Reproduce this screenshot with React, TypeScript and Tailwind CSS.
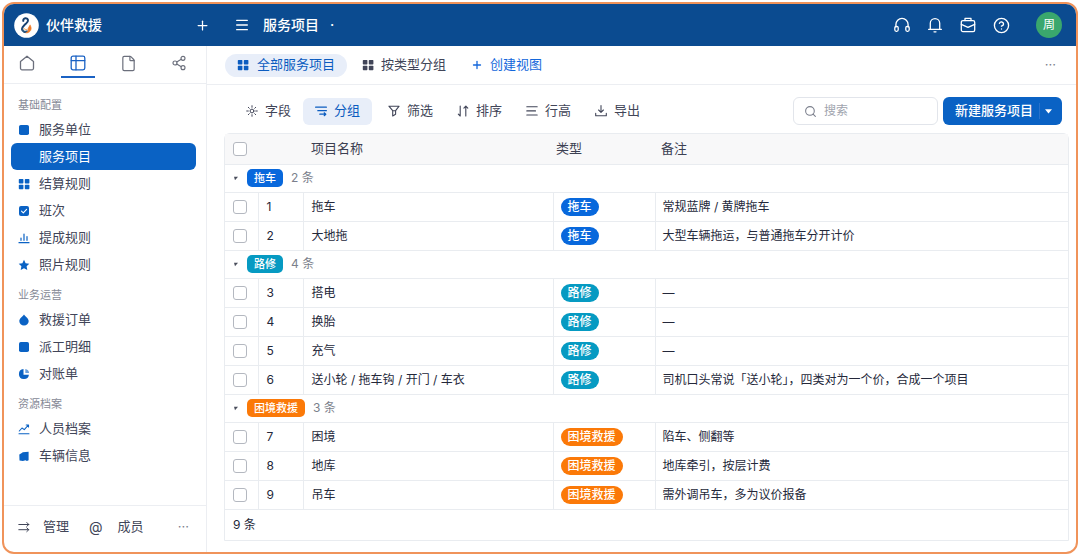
import type { ReactNode } from 'react'
import { CircleHelp, File, Menu, Plus, Search, Share2 } from 'lucide-react'

type Kind = '拖车' | '路修' | '困境救援'

interface Service {
  id: number
  name: string
  note: string
}

interface Group {
  kind: Kind
  rows: Service[]
}

interface NavEntry {
  label: string
  icon?: ReactNode
  active?: boolean
}

const kindColors: Record<Kind, string> = {
  拖车: 'bg-[#0868dc]',
  路修: 'bg-[#069ac2]',
  困境救援: 'bg-[#fb7908]',
}

const groups: Group[] = [
  {
    kind: '拖车',
    rows: [
      { id: 1, name: '拖车', note: '常规蓝牌 / 黄牌拖车' },
      { id: 2, name: '大地拖', note: '大型车辆拖运，与普通拖车分开计价' },
    ],
  },
  {
    kind: '路修',
    rows: [
      { id: 3, name: '搭电', note: '—' },
      { id: 4, name: '换胎', note: '—' },
      { id: 5, name: '充气', note: '—' },
      {
        id: 6,
        name: '送小轮 / 拖车钩 / 开门 / 车衣',
        note: '司机口头常说「送小轮」，四类对为一个价，合成一个项目',
      },
    ],
  },
  {
    kind: '困境救援',
    rows: [
      { id: 7, name: '困境', note: '陷车、侧翻等' },
      { id: 8, name: '地库', note: '地库牵引，按层计费' },
      { id: 9, name: '吊车', note: '需外调吊车，多为议价报备' },
    ],
  },
]

const total = groups.reduce((sum, group) => sum + group.rows.length, 0)

function Glyph({ children }: { children: ReactNode }) {
  return (
    <svg
      width="12"
      height="12"
      viewBox="0 0 12 12"
      fill="none"
      stroke="currentColor"
      strokeLinecap="round"
      strokeLinejoin="round"
      className="shrink-0"
      aria-hidden="true"
    >
      {children}
    </svg>
  )
}

function LineIcon({ children }: { children: ReactNode }) {
  return (
    <svg
      width="16"
      height="16"
      viewBox="0 0 16 16"
      fill="none"
      stroke="currentColor"
      strokeWidth="1.3"
      strokeLinecap="round"
      strokeLinejoin="round"
      aria-hidden="true"
    >
      {children}
    </svg>
  )
}

function SquareIcon() {
  return (
    <Glyph>
      <rect x="1" y="1" width="10" height="10" rx="1.8" fill="currentColor" stroke="none" />
    </Glyph>
  )
}

function GridIcon() {
  return (
    <Glyph>
      <g fill="currentColor" stroke="none">
        <rect x="0.8" y="1" width="4.6" height="4.4" rx="0.7" />
        <rect x="6.8" y="1" width="4.6" height="4.4" rx="0.7" />
        <rect x="0.8" y="6.8" width="4.6" height="4.4" rx="0.7" />
        <rect x="6.8" y="6.8" width="4.6" height="4.4" rx="0.7" />
      </g>
    </Glyph>
  )
}

function CheckSquareIcon() {
  return (
    <Glyph>
      <rect x="1" y="1" width="10" height="10" rx="2" fill="currentColor" stroke="none" />
      <path d="M3.5 6.2 5.3 7.8 8.6 4.4" stroke="white" strokeWidth="1.1" />
    </Glyph>
  )
}

function BarsIcon() {
  return (
    <Glyph>
      <path d="M1 10.7h10M3 8.3V6M6 8.3V2M9 8.3V4.5" strokeWidth="1.2" />
    </Glyph>
  )
}

function StarIcon() {
  return (
    <Glyph>
      <path
        d="m6 .8 1.6 3.4 3.7.5-2.7 2.6.7 3.7L6 9.2 2.7 11l.7-3.7L.7 4.7l3.7-.5z"
        fill="currentColor"
        stroke="none"
      />
    </Glyph>
  )
}

function DropIcon() {
  return (
    <Glyph>
      <path
        d="M6 .4C7.2 2.4 10.7 4.2 10.7 7.1a4.7 4.5 0 0 1-9.4 0C1.3 4.2 4.8 2.4 6 .4Z"
        fill="currentColor"
        stroke="none"
      />
    </Glyph>
  )
}

function PieIcon() {
  return (
    <Glyph>
      <path d="M5.5 1.1A5 5 0 1 0 10.9 6.7H5.5Z" fill="currentColor" stroke="none" />
      <path d="M7.3.9a4.5 4.5 0 0 1 3.8 4H7.3Z" fill="currentColor" stroke="none" opacity="0.6" />
    </Glyph>
  )
}

function TrendIcon() {
  return (
    <Glyph>
      <path d="M1 10.8h10M1.3 8 4 5l2.3 1.6L10.4 2M8.2 2h2.3v2" strokeWidth="1.1" />
    </Glyph>
  )
}

function VehicleIcon() {
  return (
    <Glyph>
      <path
        d="M1.3 4.4 3.4 3.2l1.4-.9 5.8-.5v8.4l-1.7.8-1.4-.7-2.600.7-3.400-.5Z"
        fill="currentColor"
        stroke="none"
      />
    </Glyph>
  )
}

function Logo() {
  return (
    <svg width="25" height="25" viewBox="0 0 25 25" fill="none" strokeLinecap="round" aria-hidden="true">
      <circle cx="12.5" cy="12.5" r="12.3" fill="white" />
      <path
        d="M9.3 7.9C8.6 5 13.6 4.2 14 7.2c.3 2.2-1.7 3-3.3 4.5-1.5 1.4-2.8 2.7-2.6 4.6"
        stroke="#17406f"
        strokeWidth="2"
      />
      <path d="M8.1 16.2c.4 2.6 3 3.4 4.9 2.2" stroke="#29567f" strokeWidth="2.2" />
      <path
        d="M16.1 12.3c2.6 3.4.4 7.8-4.3 7.6 1.6-1 2.7-1.6 2.3-3.2-.3-1.5.8-2.9 2-4.4Z"
        fill="#ee7b28"
        stroke="#ee7b28"
        strokeWidth="0.6"
      />
      <path d="M9.9 15.5c.6.9 1.9 1.3 3.2.9" stroke="#f3a04e" />
    </svg>
  )
}

const navSections: { title: string; items: NavEntry[] }[] = [
  {
    title: '基础配置',
    items: [
      { label: '服务单位', icon: <SquareIcon /> },
      { label: '服务项目', active: true },
      { label: '结算规则', icon: <GridIcon /> },
      { label: '班次', icon: <CheckSquareIcon /> },
      { label: '提成规则', icon: <BarsIcon /> },
      { label: '照片规则', icon: <StarIcon /> },
    ],
  },
  {
    title: '业务运营',
    items: [
      { label: '救援订单', icon: <DropIcon /> },
      { label: '派工明细', icon: <SquareIcon /> },
      { label: '对账单', icon: <PieIcon /> },
    ],
  },
  {
    title: '资源档案',
    items: [
      { label: '人员档案', icon: <TrendIcon /> },
      { label: '车辆信息', icon: <VehicleIcon /> },
    ],
  },
]

const tools: { label: string; icon: ReactNode; active?: boolean }[] = [
  {
    label: '字段',
    icon: (
      <Glyph>
        <circle cx="6" cy="6" r="1.9" />
        <path d="M6 .7v1.6M6 9.7v1.6M.7 6h1.6M9.7 6h1.6M2.3 2.3l1 1M8.7 8.7l1 1M2.3 9.7l1-1M8.7 3.3l1-1" />
      </Glyph>
    ),
  },
  {
    label: '分组',
    active: true,
    icon: (
      <Glyph>
        <path d="M.6 2.2h10.8M2.8 5.7h8.6M4.8 9.2h6M9.2 7.8l1.6 1.4-1.6 1.5" strokeWidth="1.2" />
      </Glyph>
    ),
  },
  {
    label: '筛选',
    icon: (
      <Glyph>
        <path d="M.9 1.2h10.2L7.6 5.7v3.6L4.7 11V5.7ZM4.7 5.7h2.9" strokeWidth="1.1" />
      </Glyph>
    ),
  },
  {
    label: '排序',
    icon: (
      <Glyph>
        <path d="M3.2 1v10L1.3 9.1M8.8 11V1l2 2.2M8.8 1 6.9 3.2" strokeWidth="1.1" />
      </Glyph>
    ),
  },
  {
    label: '行高',
    icon: (
      <Glyph>
        <path d="M.8 1.8h10.4M.8 5.9h8.7M.8 10h10.4" strokeWidth="1.1" />
      </Glyph>
    ),
  },
  {
    label: '导出',
    icon: (
      <Glyph>
        <path d="M6 .6v6.6M3.6 5 6 7.3 8.4 5M.7 8.2v2.6h10.6V8.2" strokeWidth="1.1" />
      </Glyph>
    ),
  },
]

function TopBar() {
  const iconButton = 'flex size-5 items-center justify-center'

  return (
    <header className="flex h-[42px] shrink-0 items-center bg-[#0b4b90] text-white">
      <div className="flex w-[206px] shrink-0 items-center gap-[7px] pl-[10px]">
        <Logo />
        <span className="text-sm font-medium">伙伴救援</span>
        <button type="button" aria-label="新建" className="ml-auto">
          <Plus size={15} strokeWidth={2} />
        </button>
      </div>
      <button type="button" aria-label="菜单" className="ml-6">
        <Menu size={16} strokeWidth={2} />
      </button>
      <h1 className="ml-[13px] text-sm font-medium">服务项目</h1>
      <span className="ml-[11px] text-sm font-medium">·</span>
      <div className="ml-auto flex items-center gap-[13px] pr-[14px]">
        <button type="button" aria-label="客服" className={iconButton}>
          <LineIcon>
            <path d="M1.9 10.2V7.5a6.1 6.1 0 0 1 12.2 0v2.7" />
            <rect x="0.8" y="9.3" width="3.4" height="5" rx="1.5" />
            <rect x="11.8" y="9.3" width="3.4" height="5" rx="1.5" />
          </LineIcon>
        </button>
        <button type="button" aria-label="通知" className={iconButton}>
          <LineIcon>
            <path d="M3.3 12.2V6.3a4.7 4.7 0 0 1 9.4 0v5.9M1.6 12.3h12.8M7 14.8h2" />
          </LineIcon>
        </button>
        <button type="button" aria-label="工具箱" className={iconButton}>
          <LineIcon>
            <rect x="1.3" y="3.6" width="13.4" height="11" rx="1.6" />
            <path d="M5 3.5V1.4h6v2.1M1.3 7.3 8 10.4l6.7-3.1" />
          </LineIcon>
        </button>
        <button type="button" aria-label="帮助" className={iconButton}>
          <CircleHelp size={17} strokeWidth={1.9} />
        </button>
        <button type="button" className="ml-3 size-[26px] rounded-full bg-[#3aa76d] text-xs">
          周
        </button>
      </div>
    </header>
  )
}

function Sidebar() {
  const tab = 'flex h-[32px] w-[34px] items-center justify-center border-b-2 pt-1'

  return (
    <aside className="flex w-[203px] shrink-0 flex-col border-r border-[#eceef2] text-[#414558]">
      <div className="flex h-[38px] shrink-0 items-start justify-between border-b border-[#eceef2] pr-[10px] pl-[6px] text-[#6b6f7c]">
        <button type="button" aria-label="首页" className={`${tab} border-transparent`}>
          <LineIcon>
            <path d="M1.5 6.4 8 1.2l6.5 5.2v6.9a1.5 1.5 0 0 1-1.5 1.5H3a1.5 1.5 0 0 1-1.5-1.5Z" />
          </LineIcon>
        </button>
        <button type="button" aria-label="表格" className={`${tab} border-[#1a62c4] text-[#1a62c4]`}>
          <LineIcon>
            <rect x="1.2" y="1.2" width="13.6" height="13.6" rx="1.8" />
            <path d="M1.2 5.6h13.6M6 1.2v13.6" />
          </LineIcon>
        </button>
        <button type="button" aria-label="文档" className={`${tab} border-transparent`}>
          <File size={17} strokeWidth={1.7} />
        </button>
        <button type="button" aria-label="分享" className={`${tab} border-transparent`}>
          <Share2 size={16} strokeWidth={1.7} />
        </button>
      </div>

      <nav className="flex flex-1 flex-col gap-[7px] pt-[11px] pr-[10px] pl-[7px]">
        {navSections.map((section) => (
          <section key={section.title}>
            <h2 className="px-[7px] text-[11px] leading-[21px] text-[#858996]">{section.title}</h2>
            {section.items.map((item) => (
              <a
                key={item.label}
                href="#"
                className={
                  item.active
                    ? 'flex h-[27px] items-center gap-[9px] rounded-md bg-[#0a62c4] px-[7px] text-[13px] text-white'
                    : 'flex h-[27px] items-center gap-[9px] px-[7px] text-[13px]'
                }
              >
                <span className="w-3 shrink-0 text-[#0a62c4]">{item.icon}</span>
                {item.label}
              </a>
            ))}
          </section>
        ))}
      </nav>

      <div className="flex h-[47px] shrink-0 items-center border-t border-[#eceef2] pr-[17px] pb-1 pl-[14px] text-[13px]">
        <button type="button" className="flex items-center gap-[13px]">
          <Glyph>
            <path d="M.8 3.5h10M8.8 1.5l2 2-2 1.8M.8 8.7h10M8.8 6.9l2 1.8-2 1.9" />
          </Glyph>
          管理
        </button>
        <button type="button" className="ml-5 flex items-center gap-[15px]">
          <span className="text-sm">@</span>
          成员
        </button>
        <button type="button" aria-label="更多" className="ml-auto text-[#7b7f8c]">
          ···
        </button>
      </div>
    </aside>
  )
}

function ViewTabs() {
  return (
    <div className="flex h-[39px] shrink-0 items-center border-b border-[#eceef2] pr-[20px] pl-[18px] text-[13px] text-[#414558]">
      <button type="button" className="flex h-[23px] items-center gap-2 rounded-full bg-[#e8eef9] px-3 text-[#0b5cc0]">
        <GridIcon />
        全部服务项目
      </button>
      <button type="button" className="ml-[15px] flex items-center gap-[7px]">
        <GridIcon />
        按类型分组
      </button>
      <button type="button" className="ml-[25px] flex items-center gap-[7px] text-[#1467db]">
        <Plus size={12} strokeWidth={2.6} />
        创建视图
      </button>
      <button type="button" aria-label="更多" className="ml-auto text-[#7b7f8c]">
        ···
      </button>
    </div>
  )
}

function Toolbar() {
  return (
    <div className="flex h-[48px] shrink-0 items-center pt-1 pr-[14px] pl-[27px] text-[13px] text-[#414558]">
      {tools.map((tool) => (
        <button
          key={tool.label}
          type="button"
          className={
            tool.active
              ? 'mr-[4px] flex h-[27px] items-center gap-[7px] rounded-md bg-[#e8eef9] px-3 text-[#0b5cc0]'
              : 'flex h-[27px] items-center gap-[7px] px-3'
          }
        >
          {tool.icon}
          {tool.label}
        </button>
      ))}
      <label className="ml-auto flex h-[28px] w-[145px] items-center gap-[7px] rounded-md border border-[#e2e5eb] px-[10px] text-[#7b7f8c]">
        <Search size={13} strokeWidth={2} className="shrink-0" />
        <input
          type="search"
          aria-label="搜索"
          placeholder="搜索"
          className="w-full min-w-0 text-xs outline-none placeholder:text-[#a0a4ae]"
        />
      </label>
      <div className="ml-[5px] flex h-[28px] items-center rounded-md bg-[#0a62c4] text-white">
        <button type="button" className="pl-3 font-medium">
          新建服务项目
        </button>
        <button
          type="button"
          aria-label="更多新建方式"
          className="ml-[6px] flex h-4 items-center border-l border-[#2a72cb] pr-[10px] pl-[5px]"
        >
          <svg width="7" height="5" viewBox="0 0 7 5" fill="currentColor" aria-hidden="true">
            <path d="M0 .3h7L3.5 4.5Z" />
          </svg>
        </button>
      </div>
    </div>
  )
}

function CheckBox({ label }: { label: string }) {
  return (
    <input
      type="checkbox"
      aria-label={label}
      className="block size-[14px] appearance-none rounded-[3px] border border-[#b4b8c0] bg-white checked:bg-[#0a62c4]"
    />
  )
}

function ServiceTable() {
  return (
    <div className="mr-[7px] ml-[17px] rounded-t-md border border-[#e9ecf0]">
      <table className="w-full table-fixed border-collapse text-xs text-[#24283a]">
        <colgroup>
          <col className="w-[33px]" />
          <col className="w-[45px]" />
          <col className="w-[250px]" />
          <col className="w-[102px]" />
          <col />
        </colgroup>
        <thead>
          <tr className="h-[30px] bg-[#f8f8f9] text-left text-[13px] text-[#3c4052]">
            <th className="pl-2 font-normal">
              <CheckBox label="全选" />
            </th>
            <th />
            <th className="pl-2 font-normal">项目名称</th>
            <th className="pl-[3px] font-normal">类型</th>
            <th className="pl-[6px] font-normal">备注</th>
          </tr>
        </thead>
        {groups.map((group) => (
          <tbody key={group.kind}>
            <tr className="h-[28px] border-t border-[#e9ecf0]">
              <td colSpan={5} className="pl-2">
                <div className="flex items-center">
                  <button type="button" aria-label={`折叠${group.kind}`} className="flex w-[14px]">
                    <svg width="5" height="5" viewBox="0 0 5 5" fill="#4a4e5c" aria-hidden="true">
                      <path d="M1 .8h4L2 4.2Z" />
                    </svg>
                  </button>
                  <span
                    className={`${kindColors[group.kind]} rounded-[5px] px-[7px] text-[11px] leading-[18px] font-medium text-white`}
                  >
                    {group.kind}
                  </span>
                  <span className="ml-2 text-[#7b7f8c]">{group.rows.length} 条</span>
                </div>
              </td>
            </tr>
            {group.rows.map((row) => (
              <tr key={row.id} className="h-[29px] border-t border-[#e9ecf0]">
                <td className="pl-2">
                  <CheckBox label={`选择${row.name}`} />
                </td>
                <td className="border-l border-[#e9ecf0] pl-2">{row.id}</td>
                <td className="border-l border-[#e9ecf0] pl-2">{row.name}</td>
                <td className="border-l border-[#e9ecf0] pl-[7px]">
                  <span
                    className={`${kindColors[group.kind]} inline-block rounded-full px-[7px] leading-[18px] font-medium text-white`}
                  >
                    {group.kind}
                  </span>
                </td>
                <td className="border-l border-[#e9ecf0] pl-[7px]">{row.note}</td>
              </tr>
            ))}
          </tbody>
        ))}
        <tfoot>
          <tr className="h-[31px] border-t border-[#e9ecf0]">
            <td colSpan={5} className="pl-2">
              {total} 条
            </td>
          </tr>
        </tfoot>
      </table>
    </div>
  )
}

export default function App() {
  return (
    <div className="min-h-screen bg-white p-[2px] font-[Inter,'Noto_Sans_CJK_SC',sans-serif]">
      <div className="flex min-h-[552px] flex-col overflow-hidden rounded-xl border-2 border-[#f0935a] bg-white">
        <TopBar />
        <div className="flex flex-1">
          <Sidebar />
          <main className="flex min-w-0 flex-1 flex-col">
            <ViewTabs />
            <Toolbar />
            <ServiceTable />
          </main>
        </div>
      </div>
    </div>
  )
}
